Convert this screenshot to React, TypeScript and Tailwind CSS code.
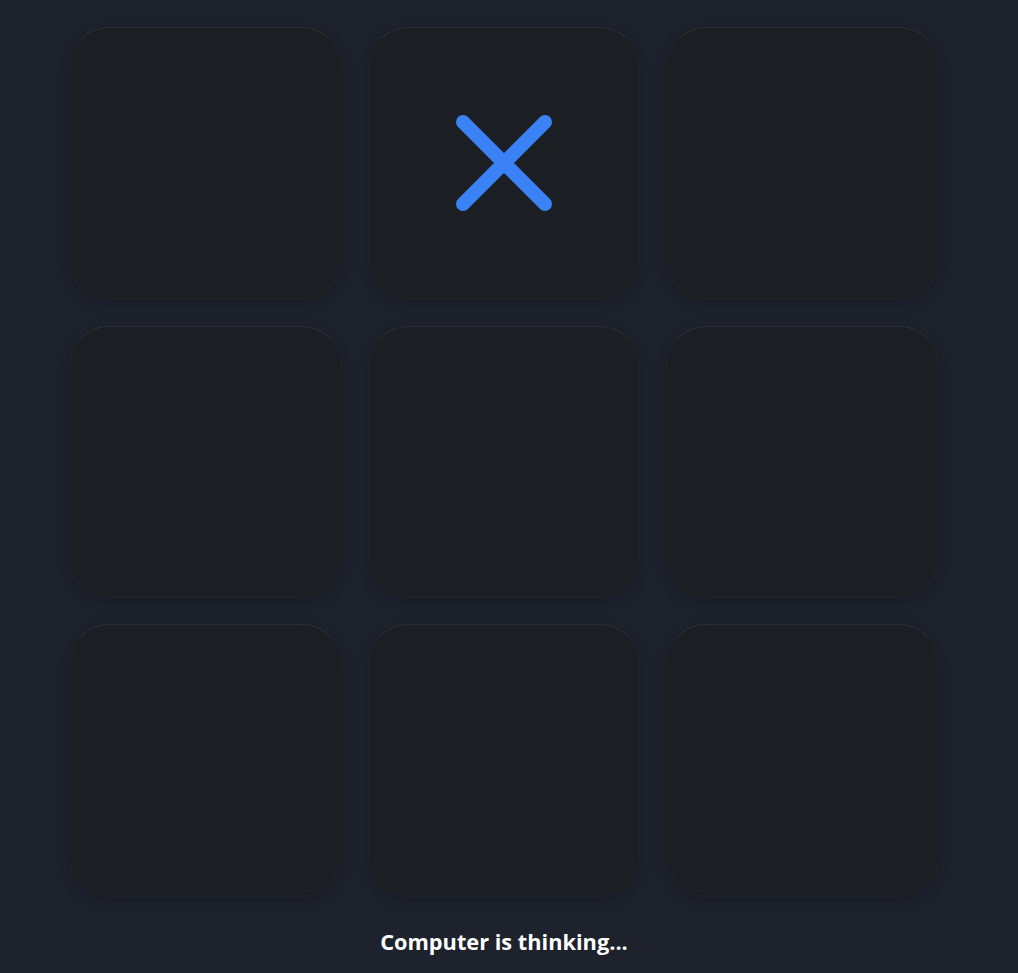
import React from "react";

const board: (string | null)[] = [null, "X", null, null, null, null, null, null, null];

function XMark() {
  return (
    <svg width="96" height="96" viewBox="0 0 96 96" fill="none">
      <path d="M7 7 L89 89 M89 7 L7 89" stroke="#3b82f6" strokeWidth="14" strokeLinecap="round" />
    </svg>
  );
}

export default function App() {
  return (
    <div
      className="min-h-[973px] w-full bg-[#1e222d] pt-[27px]"
      style={{ fontFamily: '"Open Sans", "Noto Sans", sans-serif' }}
    >
      <div className="ml-[69px] grid w-[870px] grid-cols-3 gap-[26px]">
        {board.map((v, i) => (
          <div
            key={i}
            className="flex aspect-square items-center justify-center rounded-[40px] border border-white/[0.025] border-t-white/[0.07] bg-[#1b1e23] shadow-[0_4px_14px_rgba(0,0,0,0.2)]"
          >
            {v === "X" && <XMark />}
          </div>
        ))}
      </div>
      <div className="ml-[69px] mt-[31px] w-[870px] text-center text-[21.75px] font-bold leading-[28px] text-white">
        Computer is thinking...
      </div>
    </div>
  );
}
